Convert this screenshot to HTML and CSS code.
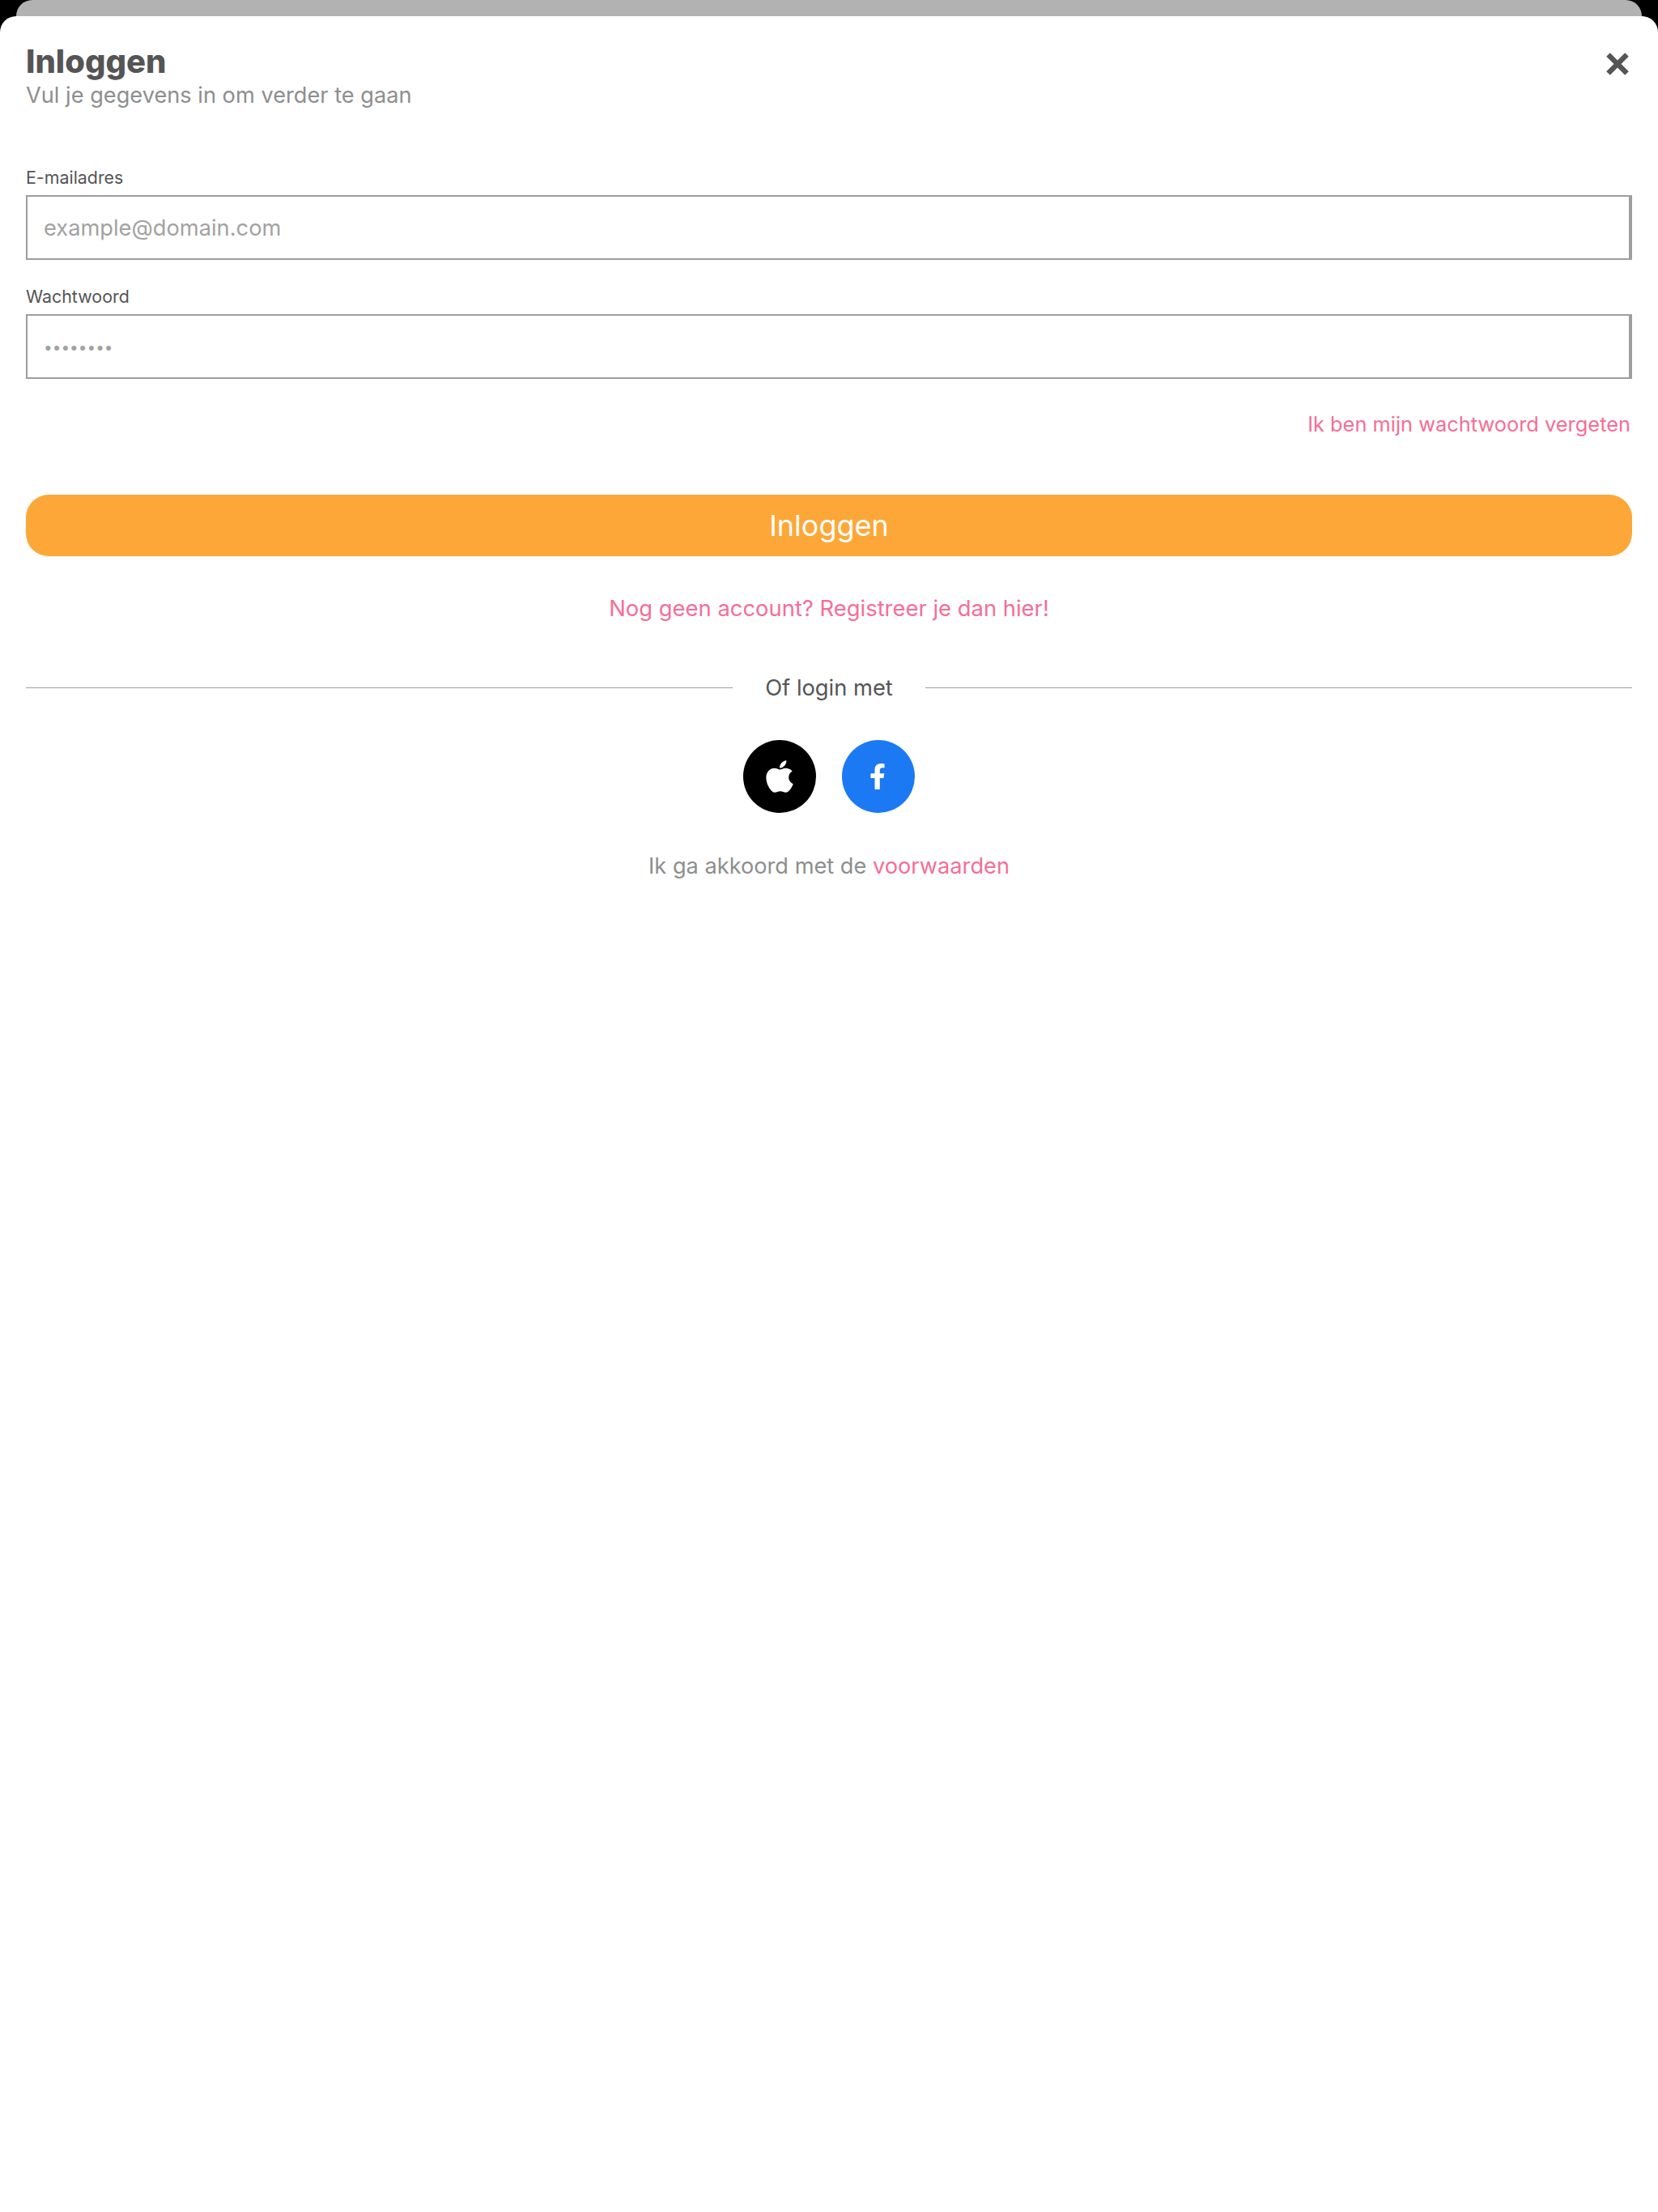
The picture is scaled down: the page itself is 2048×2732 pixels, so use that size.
FILE: index.html
```html
<!DOCTYPE html>
<html lang="nl">
<head>
<meta charset="utf-8">
<title>Inloggen</title>
<link rel="stylesheet" href="styles.css">
</head>
<body>
<div class="peek"></div>
<main class="sheet">
  <header class="head">
    <div>
      <h1 class="title">Inloggen</h1>
      <p class="subtitle">Vul je gegevens in om verder te gaan</p>
    </div>
    <button class="close" aria-label="Sluiten">
      <svg width="28" height="28" viewBox="0 0 28 28"><path d="M2.5 2.5 25.500 25.500M25.500 2.500 2.500 25.500" stroke="#555" stroke-width="6.500" fill="none"/></svg>
    </button>
  </header>
  <form class="form">
    <label class="field"><span class="label">E-mailadres</span>
      <input class="input" type="email" placeholder="example@domain.com"></label>
    <label class="field field-second"><span class="label">Wachtwoord</span>
      <input class="input input-password" type="password" placeholder="••••••••"></label>
    <div class="forgot"><a class="link" href="#">Ik ben mijn wachtwoord vergeten</a></div>
    <button class="submit" type="button">Inloggen</button>
  </form>
  <p class="register"><a class="link" href="#">Nog geen account? Registreer je dan hier!</a></p>
  <div class="divider"><span class="divider-text">Of login met</span></div>
  <div class="socials">
    <a class="social apple" href="#" aria-label="Apple">
      <svg width="34" height="46" viewBox="0 0 384 512"><path fill="#fff" d="M318.7 268.7c-.2-36.7 16.4-64.4 50-84.8-18.8-26.9-47.2-41.7-84.7-44.6-35.5-2.8-74.3 20.7-88.5 20.7-15 0-49.4-19.7-76.4-19.7C63.3 141.2 4 184.8 4 273.5q0 39.3 14.4 81.2c12.8 36.7 59 126.7 107.2 125.2 25.2-.6 43-17.9 75.8-17.9 31.8 0 48.3 17.9 76.4 17.9 48.6-.7 90.4-82.5 102.6-119.3-65.2-30.7-61.7-90-61.7-91.9zm-56.6-164.2c27.3-32.4 24.8-61.9 24-72.5-24.1 1.4-52 16.4-67.9 34.9-17.5 19.8-27.8 44.3-25.6 71.9 26.1 2 49.9-11.4 69.5-34.3z"/></svg>
    </a>
    <a class="social facebook" href="#" aria-label="Facebook">
      <svg class="facebook-icon" width="20" height="32" viewBox="0 0 320 512"><path fill="#fff" d="M279.14 288l14.22-92.66h-88.91v-60.13c0-25.35 12.42-50.06 52.24-50.06h40.42V6.26S260.43 0 225.36 0c-73.22 0-121.08 44.38-121.08 124.72v70.62H22.89V288h81.39v224h100.17V288z"/></svg>
    </a>
  </div>
  <p class="terms">Ik ga akkoord met de <a class="link" href="#">voorwaarden</a></p>
</main>
</body>
</html>
```
FILE: styles.css
```css
* { box-sizing: border-box; }
html, body { margin: 0; padding: 0; }
body {
  background: #000;
  font-family: "Inter", "Roboto", "Liberation Sans", sans-serif;
  color: #555;
  height: 2732px;
  overflow: hidden;
}
.peek {
  height: 20px;
  margin: 0 20px;
  background: #b2b2b2;
  border-radius: 20px 20px 0 0;
}
.sheet {
  height: 2712px;
  background: #fff;
  border-radius: 20px 20px 0 0;
  padding: 32px 32px 0;
}
.head { display: flex; justify-content: space-between; align-items: flex-start; }
.title { margin: 0; font-size: 40px; line-height: 48px; font-weight: 800; color: #555; }
.subtitle { margin: 1px 0 0; font-size: 27.2px; line-height: 34px; color: #8e8e8e; }
.close { border: 0; background: none; padding: 0; margin: 13px 4px 0 0; height: 28px; }
.form { margin-top: 69px; }
.field { display: block; }
.field-second { margin-top: 30px; }
.label { display: block; font-size: 21.4px; line-height: 30px; color: #555; margin-bottom: 7px; }
.input {
  display: block;
  width: 100%;
  height: 80px;
  padding: 0 20px;
  border: 2px solid #9e9e9e;
  border-right-width: 4px;
  border-radius: 0;
  outline: 0;
  font: inherit;
  font-size: 27.25px;
  color: #555;
  background: #fff;
}
.input::placeholder { color: #a2a2a2; opacity: 1; }
.input-password { padding-bottom: 3px; }
.input-password::placeholder { font-size: 19px; }
.forgot { text-align: right; margin-top: 40px; padding-right: 2px; font-size: 25.4px; line-height: 32px; }
.link { color: #f56e96; text-decoration: none; }
.submit {
  display: block;
  width: 100%;
  height: 76px;
  margin-top: 71px;
  border: 0;
  border-radius: 28px;
  background: #fda738;
  color: #fff;
  font: inherit;
  font-size: 36px;
}
.register { margin: 47px 0 0; text-align: center; font-size: 27.4px; line-height: 34px; }
.divider {
  display: flex;
  align-items: center;
  gap: 40px;
  margin-top: 63px;
  font-size: 27.3px;
  line-height: 34px;
  color: #555;
}
.divider::before, .divider::after { content: ""; flex: 1; height: 1px; background: #9e9e9e; }
.divider-text { padding-top: 2px; }
.socials { display: flex; justify-content: center; gap: 32px; margin-top: 47px; }
.social {
  display: flex;
  align-items: center;
  justify-content: center;
  width: 90px;
  height: 90px;
  border-radius: 50%;
}
.apple { background: #000; }
.facebook { background: #1b79f4; }
.facebook-icon { margin-right: 3px; }
.terms { margin: 49px 0 0; text-align: center; font-size: 27.2px; line-height: 34px; color: #8e8e8e; }
```
